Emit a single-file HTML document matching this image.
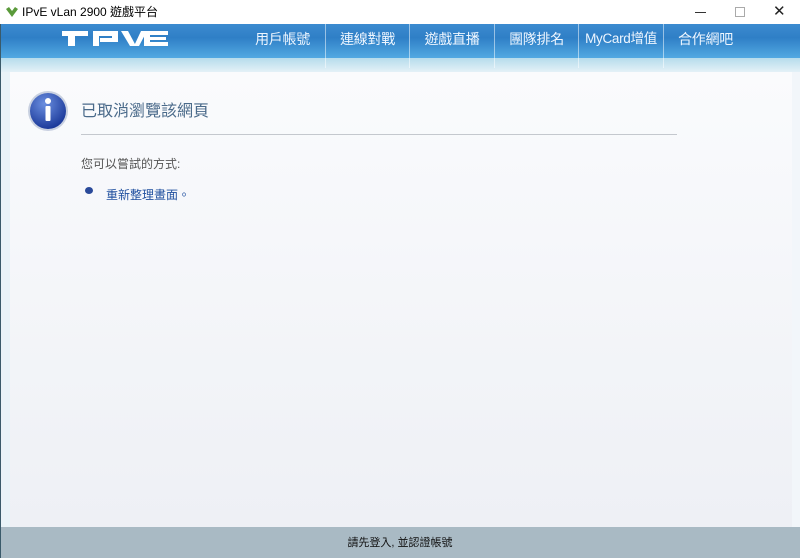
<!DOCTYPE html>
<html><head><meta charset="utf-8"><style>
*{margin:0;padding:0;box-sizing:border-box}
body{width:800px;height:558px;overflow:hidden;background:#a9bac4;font-family:"Liberation Sans","Noto Sans CJK TC",sans-serif;position:relative}
.title{position:absolute;left:0;top:0;width:800px;height:24px;background:#fff;font-size:12px;color:#000}
.title span{position:absolute;left:22px;top:3px}
.hdr{position:absolute;left:0;top:24px;width:800px;height:34px;background:linear-gradient(#3c8bd0,#2f7fc6 40%,#52a9e2)}
.band{position:absolute;left:0;top:58px;width:800px;height:14px;background:linear-gradient(#b6dcec,#e4f1f7)}
.side{position:absolute;left:0;top:72px;width:800px;height:455px;background:linear-gradient(90deg,#e9f3f8,#f2f6fa)}
.lb{position:absolute;left:0;top:24px;width:1px;height:534px;background:#3a5a6a}
.nav{position:absolute;top:24px;height:44px;color:#eef6ff;font-size:14px;text-align:center;line-height:30px;border-left:1px solid rgba(255,255,255,.5);letter-spacing:-0.3px}
.panel{position:absolute;left:10px;top:72px;width:782px;height:455px;background:linear-gradient(#fafbfd,#eef0f5)}
.foot{position:absolute;left:0;top:534px;width:800px;text-align:center;font-size:11px;color:#111}
</style></head><body>
<div class="title"><svg style="position:absolute;left:5px;top:6px" width="14" height="12"><path d="M1 3 L7 11 L13 3 L10 1 L7 5 L4 1Z" fill="#5a9a3a"/></svg><span>IPvE vLan 2900 遊戲平台</span>
<div style="position:absolute;left:695px;top:12px;width:11px;height:1px;background:#333"></div>
<div style="position:absolute;left:735px;top:7px;width:10px;height:10px;border:1px solid #aaa"></div>
<span style="left:773px;top:2px;font-size:15px;color:#222">✕</span></div>
<div class="hdr"></div>
<div class="band"></div>
<div class="side"></div>
<div class="lb"></div>
<svg style="position:absolute;left:0;top:0" width="200" height="60">
<g fill="#fff">
<rect x="62" y="31" width="26" height="5"/><rect x="68" y="36" width="7" height="10"/>
<rect x="93" y="31" width="25" height="5"/><rect x="112" y="31" width="6" height="11"/><rect x="100" y="38" width="18" height="4"/><rect x="93" y="36" width="6" height="10"/>
<polygon points="121,31 128,31 136,46 130,46"/><polygon points="134,46 141,31 147,31 139,46"/>
<rect x="144" y="31" width="24" height="4"/><rect x="144" y="31" width="6" height="15"/><rect x="150" y="37" width="16" height="3"/><rect x="144" y="42" width="24" height="4"/>
</g></svg>
<div class="nav" style="left:240px;width:85px;border-left:none">用戶帳號</div>
<div class="nav" style="left:325px;width:84px">連線對戰</div>
<div class="nav" style="left:409px;width:85px">遊戲直播</div>
<div class="nav" style="left:494px;width:84px">團隊排名</div>
<div class="nav" style="left:578px;width:85px;font-size:13.5px">MyCard增值</div>
<div class="nav" style="left:663px;width:84px">合作網吧</div>
<div class="panel"></div>
<svg style="position:absolute;left:27px;top:90px" width="42" height="42"><defs><radialGradient id="g" cx="40%" cy="30%" r="70%"><stop offset="0" stop-color="#6b8fe0"/><stop offset="1" stop-color="#1c3a9a"/></radialGradient></defs><circle cx="21" cy="21" r="20" fill="#c8d0e0"/><circle cx="21" cy="21" r="18" fill="url(#g)"/><circle cx="21" cy="11" r="3" fill="#fff"/><rect x="18.5" y="16" width="5" height="15" rx="1" fill="#fff"/></svg>
<div style="position:absolute;left:81px;top:97px;font-size:16px;color:#4a6a8a">已取消瀏覽該網頁</div>
<div style="position:absolute;left:81px;top:134px;width:596px;height:1px;background:#c4c8ce"></div>
<div style="position:absolute;left:81px;top:155px;font-size:12px;color:#555">您可以嘗試的方式:</div>
<div style="position:absolute;left:85px;top:187px;width:8px;height:7px;border-radius:50%;background:#2a4a9a"></div>
<div style="position:absolute;left:106px;top:186px;font-size:12px;color:#1f4f9f">重新整理畫面。</div>
<div class="foot">請先登入, 並認證帳號</div>
</body></html>
